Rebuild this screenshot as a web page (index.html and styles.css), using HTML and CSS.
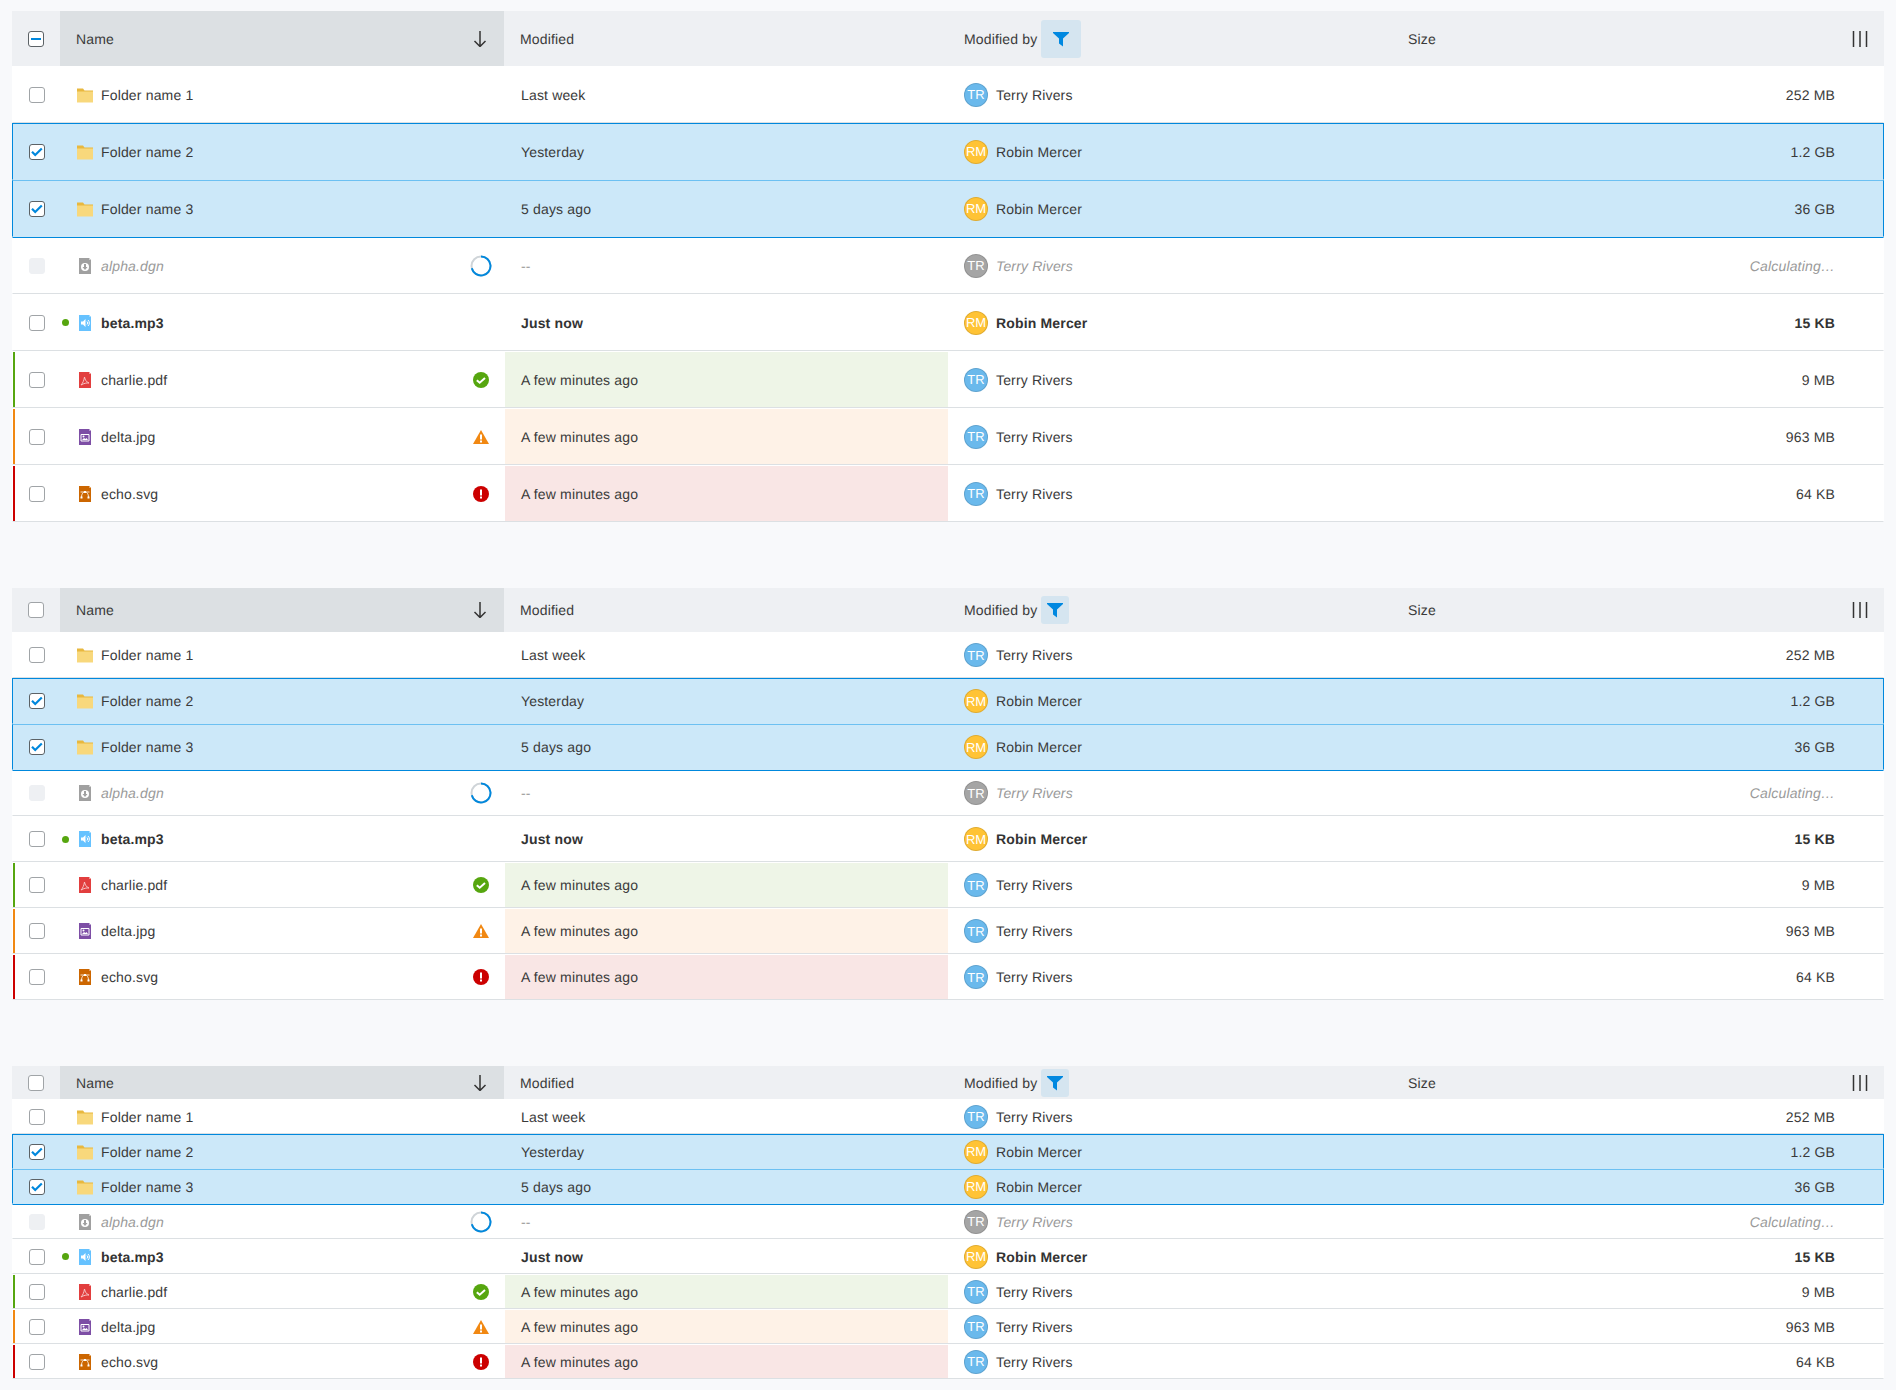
FILE: index.html
```html
<!DOCTYPE html>
<html lang="en">
<head>
  <meta charset="UTF-8" />
  <title>Table density</title>
  <link rel="stylesheet" href="styles.css">
</head>
<body>
  <!-- icon sprite, reused by all three tables -->
  <svg class="sprite" xmlns="http://www.w3.org/2000/svg">
    <symbol id="i-folder" viewBox="0 0 16 16"><path fill="#e8b83f" d="M0 1.500h6l1.500 2H16v2H0z"/><path fill="#f8d87c" d="M0 4.500h16v11H0z"/></symbol>
    <symbol id="i-dgn" viewBox="0 0 16 16"><path fill="#a0a0a0" d="M2 0h10l2 2v14H2z"/><path fill="#d0d0d0" d="M12 0l2 2h-2z"/><circle cx="8" cy="9" r="4" fill="#fff"/><path fill="#a0a0a0" d="M7 6h2v3h1.500L8 12 5.500 9H7z"/></symbol>
    <symbol id="i-mp3" viewBox="0 0 16 16"><path fill="#66c2ff" d="M2 0h10l2 2v14H2z"/><path fill="#9ad7ff" d="M12 0l2 2h-2z"/><path fill="#fff" d="M4 6.500h2L8.500 4v8L6 9.500H4z"/><path fill="none" stroke="#fff" d="M10 6.500a2 2 0 0 1 0 3M11 5a4 4 0 0 1 0 6"/></symbol>
    <symbol id="i-pdf" viewBox="0 0 16 16"><path fill="#e23e3e" d="M2 0h10l2 2v14H2z"/><path fill="#f09a9a" d="M12 0l2 2h-2z"/><path fill="none" stroke="#f7c4c4" d="M4 13c2-2 3-5 3.500-8 .5 3 2 5 4.500 6-2.500-.3-5 .3-8 2z"/></symbol>
    <symbol id="i-jpg" viewBox="0 0 16 16"><path fill="#7d4ea5" d="M2 0h10l2 2v14H2z"/><path fill="#b496cf" d="M12 0l2 2h-2z"/><path fill="none" stroke="#fff" d="M4 5.500h8v6.500H4z"/><path fill="#fff" d="M5 11l2-2 1.500 1 1-1 1.500 2z"/><circle cx="6.500" cy="7.500" r="1" fill="#fff"/></symbol>
    <symbol id="i-svg" viewBox="0 0 16 16"><path fill="#cc6600" d="M2 0h10l2 2v14H2z"/><path fill="#e3a366" d="M12 0l2 2h-2z"/><path fill="none" stroke="#fff" stroke-width=".8" d="M4.500 11c0-3 1.500-5 3.500-5s3.500 2 3.500 5M3.500 6h9"/><path fill="#fff" d="M3.500 10.500h2v2h-2zM10.500 10.500h2v2h-2zM7 5h2v2H7z"/></symbol>
    <symbol id="i-ok" viewBox="0 0 16 16"><circle cx="8" cy="8" r="8" fill="#56a60f"/><path fill="none" stroke="#fff" stroke-width="2" d="M3.800 8.200l2.900 2.500 5.300-4.700"/></symbol>
    <symbol id="i-warn" viewBox="0 0 16 16"><path fill="#f18812" d="M8 1l8 14H0z"/><path fill="#fff" d="M7 5.500h2v5H7zM7 11.500h2v2H7z"/></symbol>
    <symbol id="i-err" viewBox="0 0 16 16"><circle cx="8" cy="8" r="8" fill="#cc0000"/><path fill="#fff" d="M7 3.500h2v6H7zM7 10.500h2v2H7z"/></symbol>
    <symbol id="i-spin" viewBox="0 0 22 22"><circle cx="11" cy="11" r="9.500" fill="none" stroke="#cfd4d8" stroke-width="2"/><path fill="none" stroke="#0088dd" stroke-width="2" d="M11 1.500a9.500 9.500 0 1 1-9.200 11.800"/></symbol>
    <symbol id="i-sort" viewBox="0 0 16 16"><path fill="none" stroke="#333" stroke-width="1.500" d="M8 0v15M2.500 10l5.500 5.500 5.500-5.500"/></symbol>
    <symbol id="i-filter" viewBox="0 0 16 16"><path fill="#0088e0" d="M0 1h16v1l-6 5.500v8l-4-3V7.500L0 2z"/></symbol>
    <symbol id="i-cols" viewBox="0 0 16 16"><path fill="none" stroke="#333" stroke-width="1.500" d="M1.500 0v16M8 0v16M14.500 0v16"/></symbol>
    <symbol id="i-check" viewBox="0 0 16 16"><path fill="none" stroke="#0088dd" stroke-width="2.200" d="M3 7.800l3.200 3.200L12.800 4.500"/></symbol>
  </svg>

  <!-- large -->
  <div class="table lg">
    <div class="head">
      <div class="hchk"><span class="box mixed"></span></div>
      <div class="hcell sorted">Name <svg class="ico end"><use href="#i-sort"/></svg></div>
      <div class="hcell">Modified</div>
      <div class="hcell">Modified by <span class="filter"><svg class="ico"><use href="#i-filter"/></svg></span></div>
      <div class="hcell">Size <svg class="ico end"><use href="#i-cols"/></svg></div>
    </div>
    <div class="row">
      <div class="chk"><span class="box"></span></div>
      <div class="name"><svg class="ico"><use href="#i-folder"/></svg>Folder name 1</div>
      <div class="cell">Last week</div>
      <div class="cell by"><span class="av tr">TR</span>Terry Rivers</div>
      <div class="cell size">252 MB</div>
    </div>
    <div class="row sel">
      <div class="chk"><span class="box on"><svg class="ico"><use href="#i-check"/></svg></span></div>
      <div class="name"><svg class="ico"><use href="#i-folder"/></svg>Folder name 2</div>
      <div class="cell">Yesterday</div>
      <div class="cell by"><span class="av rm">RM</span>Robin Mercer</div>
      <div class="cell size">1.2 GB</div>
    </div>
    <div class="row sel">
      <div class="chk"><span class="box on"><svg class="ico"><use href="#i-check"/></svg></span></div>
      <div class="name"><svg class="ico"><use href="#i-folder"/></svg>Folder name 3</div>
      <div class="cell">5 days ago</div>
      <div class="cell by"><span class="av rm">RM</span>Robin Mercer</div>
      <div class="cell size">36 GB</div>
    </div>
    <div class="row busy">
      <div class="chk"><span class="box off"></span></div>
      <div class="name"><svg class="ico"><use href="#i-dgn"/></svg>alpha.dgn<svg class="spin end"><use href="#i-spin"/></svg></div>
      <div class="cell">--</div>
      <div class="cell by"><span class="av gr">TR</span>Terry Rivers</div>
      <div class="cell size">Calculating…</div>
    </div>
    <div class="row fresh">
      <div class="chk"><span class="box"></span></div>
      <div class="name"><span class="dot"></span><svg class="ico"><use href="#i-mp3"/></svg>beta.mp3</div>
      <div class="cell">Just now</div>
      <div class="cell by"><span class="av rm">RM</span>Robin Mercer</div>
      <div class="cell size">15 KB</div>
    </div>
    <div class="row ok">
      <div class="chk"><span class="box"></span></div>
      <div class="name"><svg class="ico"><use href="#i-pdf"/></svg>charlie.pdf<svg class="ico end"><use href="#i-ok"/></svg></div>
      <div class="cell tint">A few minutes ago</div>
      <div class="cell by"><span class="av tr">TR</span>Terry Rivers</div>
      <div class="cell size">9 MB</div>
    </div>
    <div class="row warn">
      <div class="chk"><span class="box"></span></div>
      <div class="name"><svg class="ico"><use href="#i-jpg"/></svg>delta.jpg<svg class="ico end"><use href="#i-warn"/></svg></div>
      <div class="cell tint">A few minutes ago</div>
      <div class="cell by"><span class="av tr">TR</span>Terry Rivers</div>
      <div class="cell size">963 MB</div>
    </div>
    <div class="row err">
      <div class="chk"><span class="box"></span></div>
      <div class="name"><svg class="ico"><use href="#i-svg"/></svg>echo.svg<svg class="ico end"><use href="#i-err"/></svg></div>
      <div class="cell tint">A few minutes ago</div>
      <div class="cell by"><span class="av tr">TR</span>Terry Rivers</div>
      <div class="cell size">64 KB</div>
    </div>
  </div>

  <!-- medium -->
  <div class="table md">
    <div class="head">
      <div class="hchk"><span class="box"></span></div>
      <div class="hcell sorted">Name <svg class="ico end"><use href="#i-sort"/></svg></div>
      <div class="hcell">Modified</div>
      <div class="hcell">Modified by <span class="filter"><svg class="ico"><use href="#i-filter"/></svg></span></div>
      <div class="hcell">Size <svg class="ico end"><use href="#i-cols"/></svg></div>
    </div>
    <div class="row">
      <div class="chk"><span class="box"></span></div>
      <div class="name"><svg class="ico"><use href="#i-folder"/></svg>Folder name 1</div>
      <div class="cell">Last week</div>
      <div class="cell by"><span class="av tr">TR</span>Terry Rivers</div>
      <div class="cell size">252 MB</div>
    </div>
    <div class="row sel">
      <div class="chk"><span class="box on"><svg class="ico"><use href="#i-check"/></svg></span></div>
      <div class="name"><svg class="ico"><use href="#i-folder"/></svg>Folder name 2</div>
      <div class="cell">Yesterday</div>
      <div class="cell by"><span class="av rm">RM</span>Robin Mercer</div>
      <div class="cell size">1.2 GB</div>
    </div>
    <div class="row sel">
      <div class="chk"><span class="box on"><svg class="ico"><use href="#i-check"/></svg></span></div>
      <div class="name"><svg class="ico"><use href="#i-folder"/></svg>Folder name 3</div>
      <div class="cell">5 days ago</div>
      <div class="cell by"><span class="av rm">RM</span>Robin Mercer</div>
      <div class="cell size">36 GB</div>
    </div>
    <div class="row busy">
      <div class="chk"><span class="box off"></span></div>
      <div class="name"><svg class="ico"><use href="#i-dgn"/></svg>alpha.dgn<svg class="spin end"><use href="#i-spin"/></svg></div>
      <div class="cell">--</div>
      <div class="cell by"><span class="av gr">TR</span>Terry Rivers</div>
      <div class="cell size">Calculating…</div>
    </div>
    <div class="row fresh">
      <div class="chk"><span class="box"></span></div>
      <div class="name"><span class="dot"></span><svg class="ico"><use href="#i-mp3"/></svg>beta.mp3</div>
      <div class="cell">Just now</div>
      <div class="cell by"><span class="av rm">RM</span>Robin Mercer</div>
      <div class="cell size">15 KB</div>
    </div>
    <div class="row ok">
      <div class="chk"><span class="box"></span></div>
      <div class="name"><svg class="ico"><use href="#i-pdf"/></svg>charlie.pdf<svg class="ico end"><use href="#i-ok"/></svg></div>
      <div class="cell tint">A few minutes ago</div>
      <div class="cell by"><span class="av tr">TR</span>Terry Rivers</div>
      <div class="cell size">9 MB</div>
    </div>
    <div class="row warn">
      <div class="chk"><span class="box"></span></div>
      <div class="name"><svg class="ico"><use href="#i-jpg"/></svg>delta.jpg<svg class="ico end"><use href="#i-warn"/></svg></div>
      <div class="cell tint">A few minutes ago</div>
      <div class="cell by"><span class="av tr">TR</span>Terry Rivers</div>
      <div class="cell size">963 MB</div>
    </div>
    <div class="row err">
      <div class="chk"><span class="box"></span></div>
      <div class="name"><svg class="ico"><use href="#i-svg"/></svg>echo.svg<svg class="ico end"><use href="#i-err"/></svg></div>
      <div class="cell tint">A few minutes ago</div>
      <div class="cell by"><span class="av tr">TR</span>Terry Rivers</div>
      <div class="cell size">64 KB</div>
    </div>
  </div>

  <!-- small -->
  <div class="table sm">
    <div class="head">
      <div class="hchk"><span class="box"></span></div>
      <div class="hcell sorted">Name <svg class="ico end"><use href="#i-sort"/></svg></div>
      <div class="hcell">Modified</div>
      <div class="hcell">Modified by <span class="filter"><svg class="ico"><use href="#i-filter"/></svg></span></div>
      <div class="hcell">Size <svg class="ico end"><use href="#i-cols"/></svg></div>
    </div>
    <div class="row">
      <div class="chk"><span class="box"></span></div>
      <div class="name"><svg class="ico"><use href="#i-folder"/></svg>Folder name 1</div>
      <div class="cell">Last week</div>
      <div class="cell by"><span class="av tr">TR</span>Terry Rivers</div>
      <div class="cell size">252 MB</div>
    </div>
    <div class="row sel">
      <div class="chk"><span class="box on"><svg class="ico"><use href="#i-check"/></svg></span></div>
      <div class="name"><svg class="ico"><use href="#i-folder"/></svg>Folder name 2</div>
      <div class="cell">Yesterday</div>
      <div class="cell by"><span class="av rm">RM</span>Robin Mercer</div>
      <div class="cell size">1.2 GB</div>
    </div>
    <div class="row sel">
      <div class="chk"><span class="box on"><svg class="ico"><use href="#i-check"/></svg></span></div>
      <div class="name"><svg class="ico"><use href="#i-folder"/></svg>Folder name 3</div>
      <div class="cell">5 days ago</div>
      <div class="cell by"><span class="av rm">RM</span>Robin Mercer</div>
      <div class="cell size">36 GB</div>
    </div>
    <div class="row busy">
      <div class="chk"><span class="box off"></span></div>
      <div class="name"><svg class="ico"><use href="#i-dgn"/></svg>alpha.dgn<svg class="spin end"><use href="#i-spin"/></svg></div>
      <div class="cell">--</div>
      <div class="cell by"><span class="av gr">TR</span>Terry Rivers</div>
      <div class="cell size">Calculating…</div>
    </div>
    <div class="row fresh">
      <div class="chk"><span class="box"></span></div>
      <div class="name"><span class="dot"></span><svg class="ico"><use href="#i-mp3"/></svg>beta.mp3</div>
      <div class="cell">Just now</div>
      <div class="cell by"><span class="av rm">RM</span>Robin Mercer</div>
      <div class="cell size">15 KB</div>
    </div>
    <div class="row ok">
      <div class="chk"><span class="box"></span></div>
      <div class="name"><svg class="ico"><use href="#i-pdf"/></svg>charlie.pdf<svg class="ico end"><use href="#i-ok"/></svg></div>
      <div class="cell tint">A few minutes ago</div>
      <div class="cell by"><span class="av tr">TR</span>Terry Rivers</div>
      <div class="cell size">9 MB</div>
    </div>
    <div class="row warn">
      <div class="chk"><span class="box"></span></div>
      <div class="name"><svg class="ico"><use href="#i-jpg"/></svg>delta.jpg<svg class="ico end"><use href="#i-warn"/></svg></div>
      <div class="cell tint">A few minutes ago</div>
      <div class="cell by"><span class="av tr">TR</span>Terry Rivers</div>
      <div class="cell size">963 MB</div>
    </div>
    <div class="row err">
      <div class="chk"><span class="box"></span></div>
      <div class="name"><svg class="ico"><use href="#i-svg"/></svg>echo.svg<svg class="ico end"><use href="#i-err"/></svg></div>
      <div class="cell tint">A few minutes ago</div>
      <div class="cell by"><span class="av tr">TR</span>Terry Rivers</div>
      <div class="cell size">64 KB</div>
    </div>
  </div>
</body>
</html>
```

FILE: styles.css
```css
* {
  box-sizing: border-box;
}
body {
  margin: 0;
  padding: 11px 12px 0;
  background: #f8f9fb;
  font-family: "Liberation Sans", Arial, sans-serif;
  font-size: 14px;
  letter-spacing: 0.16px;
  color: #3a3a3a;
  text-rendering: geometricPrecision;
}
.sprite {
  display: none;
}
.table {
  margin-bottom: 66px;
}

/* densities */
.lg .head { height: 55px; }
.lg .row { height: 57px; }
.md .head { height: 44px; }
.md .row { height: 46px; }
.sm .head { height: 33px; }
.sm .row { height: 35px; }

.head, .row {
  display: grid;
}
.head {
  grid-template-columns: 48px 444px 444px 444px 1fr;
  background: #eef0f3;
}
.row {
  grid-template-columns: 48px 444px 443px 444px 1fr;
  background: #fff;
  border: 1px solid transparent;
  border-bottom-color: #dce0e3;
}
.hchk, .chk {
  display: flex;
  align-items: center;
  padding-left: 16px;
}
.hcell {
  display: flex;
  align-items: center;
  padding: 0 16px;
}
.hcell.sorted {
  background: #dce0e3;
}
.filter {
  display: flex;
  align-items: center;
  justify-content: center;
  width: 28px;
  height: 28px;
  margin-left: 4px;
  background: #d5e5f0;
  border-radius: 3px;
}
.lg .filter {
  width: 40px;
  height: 38px;
}

.row .cell, .row .name {
  display: flex;
  align-items: center;
  padding: 0 16px;
}
.row .size {
  justify-content: flex-end;
  padding-right: 48px;
}
.row .name .ico:first-of-type {
  margin-right: 8px;
}
.ico {
  display: block;
  flex: none;
  width: 16px;
  height: 16px;
}
.end {
  margin-left: auto;
}
.name .ico.end {
  margin-right: 0;
}
.spin {
  display: block;
  flex: none;
  width: 22px;
  height: 22px;
  margin-right: -3px;
}

/* checkboxes */
.box {
  display: block;
  width: 16px;
  height: 16px;
  background: #fff;
  border: 1px solid #a0a4a7;
  border-radius: 3px;
}
.box.off {
  background: #eef0f3;
  border-color: #eef0f3;
}
.box.on {
  border-color: #5c6266;
}
.box.on .ico {
  margin: -1px;
}
.box.mixed {
  position: relative;
  border-color: #5c6266;
}
.box.mixed::after {
  content: "";
  position: absolute;
  left: 2px;
  right: 2px;
  top: 6px;
  height: 2px;
  background: #0088dd;
}

/* avatars */
.av {
  display: flex;
  align-items: center;
  justify-content: center;
  flex: none;
  width: 24px;
  height: 24px;
  margin-right: 8px;
  border-radius: 50%;
  border: 1px solid rgba(0, 0, 0, 0.12);
  color: #fff;
  font-size: 13px;
  letter-spacing: 0;
}
.av.tr { background: #6ab9ec; }
.av.rm { background: #ffc335; }
.av.gr { background: #a5a5a5; }

/* row states */
.row.sel {
  background: #cce8f9;
  border-left-color: #0088dd;
  border-right-color: #0088dd;
  border-top-color: #0088dd;
  border-bottom-color: transparent;
}
.row.sel + .row.sel {
  border-top-color: #6cc0f2;
}
.row.sel + .row:not(.sel) {
  border-top-color: #0088dd;
}
.busy {
  color: #9a9a9a;
}
.busy .name, .busy .by, .busy .size {
  font-style: italic;
}
.busy .av {
  font-style: normal;
}
.fresh {
  font-weight: bold;
  color: #333;
}
.fresh .av {
  font-weight: normal;
}
.dot {
  flex: none;
  width: 7px;
  height: 7px;
  margin: 0 8px 0 -15px;
  border-radius: 50%;
  background: #56a60f;
}
.ok .chk { box-shadow: inset 2px 0 0 #56a60f; }
.warn .chk { box-shadow: inset 2px 0 0 #f18812; }
.err .chk { box-shadow: inset 2px 0 0 #cc0000; }
.ok .tint { background: #eef5e7; }
.warn .tint { background: #fef2e7; }
.err .tint { background: #f9e6e5; }
```
